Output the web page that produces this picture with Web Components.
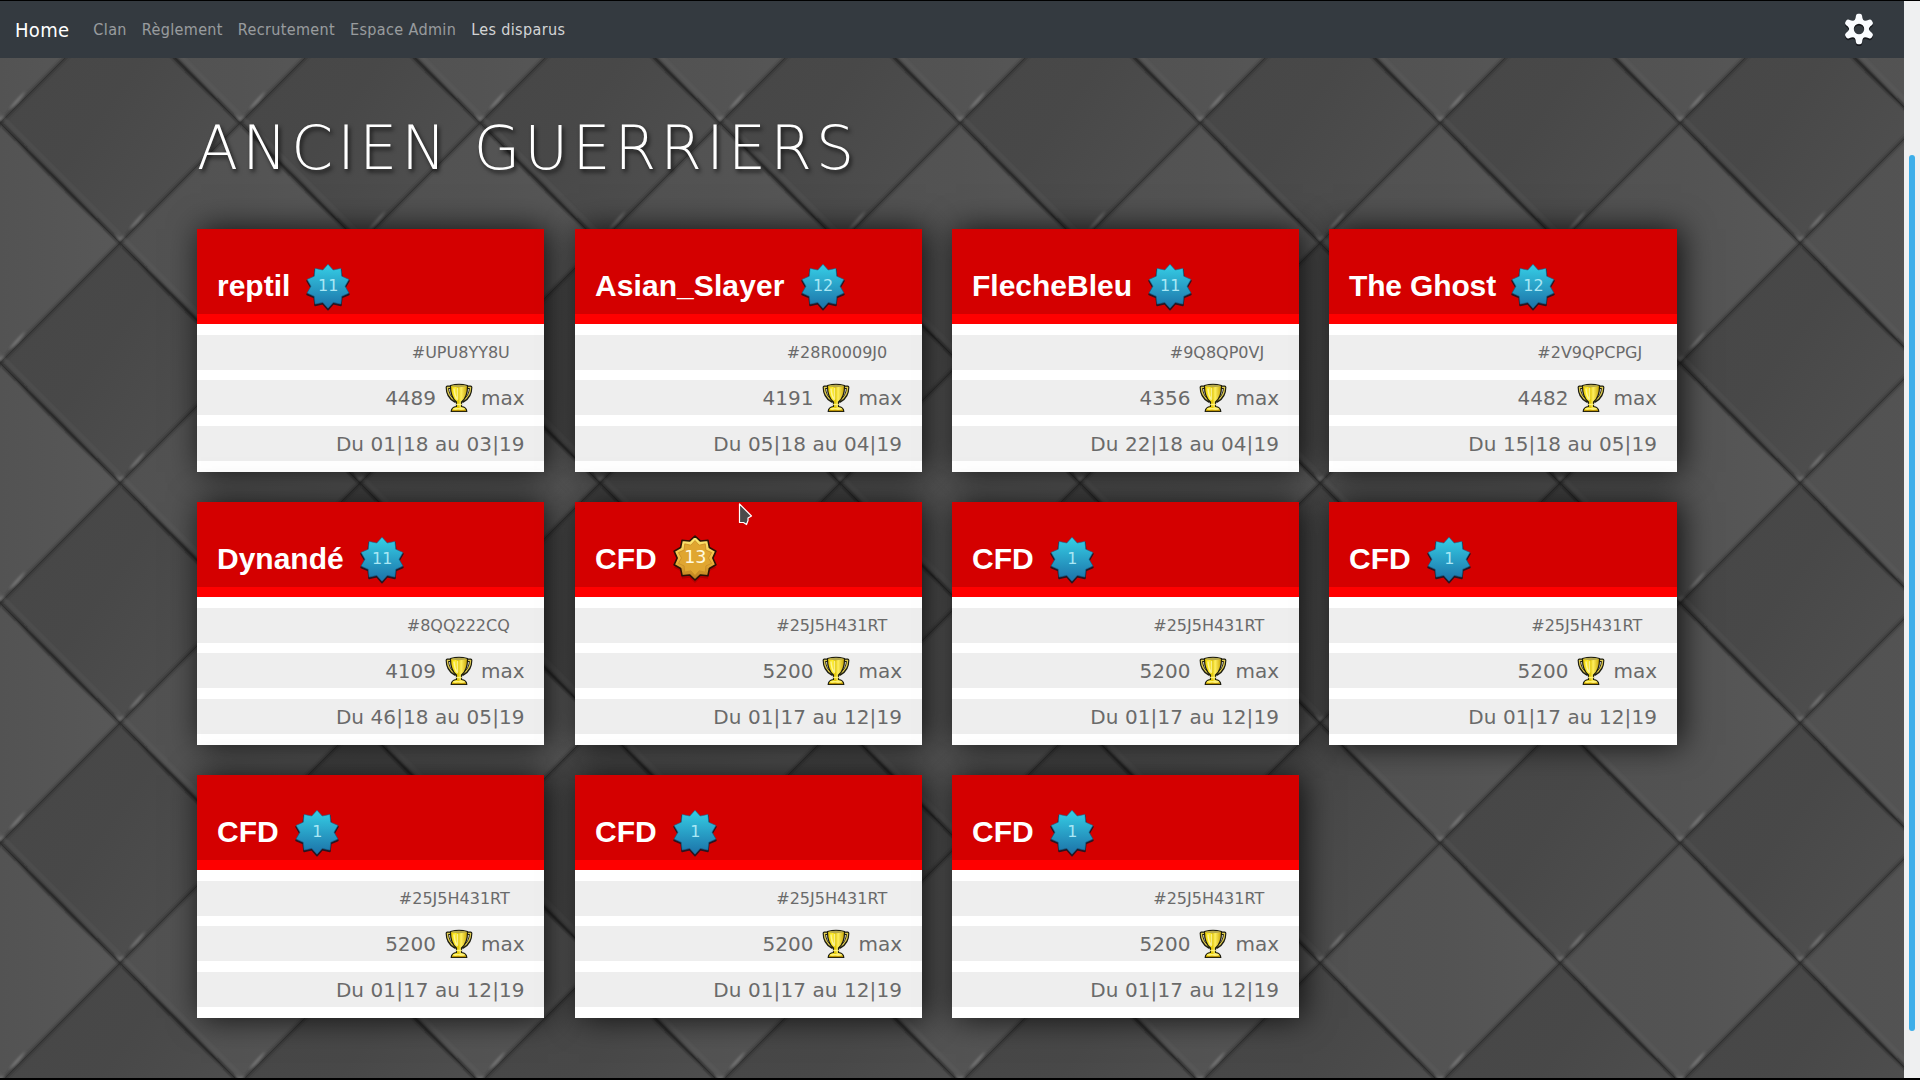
<!DOCTYPE html>
<html lang="fr">
<head>
<meta charset="utf-8">
<title>Les disparus</title>
<style>
html,body{margin:0;height:100%;overflow:hidden;background:#000}
body{font-family:"DejaVu Sans",sans-serif}
</style>
</head>
<body>
<clan-page></clan-page>
<script>
const define = (name, html) => {
  const t = document.createElement('template');
  t.innerHTML = html;
  customElements.define(name, class extends HTMLElement {
    constructor() {
      super();
      this.attachShadow({mode: 'open'}).appendChild(t.content.cloneNode(true));
    }
  });
};

// One seam running down-right from a node, thickest in its middle.
const downSeam = ([x, y]) => `
<path d="M${x+3} ${y-3}L${x+123} ${y+117}" transform="translate(1.800 -.8)" stroke="#6b6b6b" stroke-opacity=".4" stroke-width="1.600"/>
<path d="M${x} ${y}L${x+120} ${y+120}" stroke="#262626" stroke-opacity=".66" stroke-width="2.600"/>
<path d="M${x} ${y}Q${x+64} ${y+59} ${x+120} ${y+120}Q${x+55} ${y+62} ${x} ${y}Z" fill="#202020" fill-opacity=".6"/>`;
// One seam running up-right from a node.
const upSeam = ([x, y]) => `
<path d="M${x} ${y}L${x+120} ${y-120}" stroke="#2c2c2c" stroke-opacity=".62" stroke-width="2.400"/>
<path d="M${x} ${y}L${x+120} ${y-120}" stroke="#2c2c2c" stroke-opacity=".18" stroke-width="6"/>`;
const glint = ([x, y]) => `<path d="M${x+9} ${y-14}Q${x+14} ${y-22} ${x+25} ${y-32}Q${x+20} ${y-20} ${x+9} ${y-14}Z" fill="#a0a0a0" fill-opacity=".45"/>
<path d="M${x-4} ${y-9}L${x} ${y-2}L${x+4} ${y-8}L${x} ${y-5}Z" fill="#aaa" fill-opacity=".5"/>`;
const nodesDown = [[0,120],[120,0],[-120,0],[120,240],[0,-120],[240,120]];
const nodesUp = [[0,120],[120,240],[-120,240],[120,0],[0,360],[240,120]];
const nodesGlint = [[0,120],[240,120],[120,240],[120,0]];

define('leather-wall', `
<style>:host{display:block;width:100%;height:100%}svg{display:block;width:100%;height:100%}</style>
<svg aria-hidden="true">
<defs>
<linearGradient id="d" x1="0" y1="0" x2="1" y2=".7"><stop offset="0.2" stop-color="#474747"/><stop offset=".5" stop-color="#484848"/><stop offset="1" stop-color="#505050"/></linearGradient>
<linearGradient id="l" x1="0" y1="0" x2="1" y2="0"><stop offset="0" stop-color="#515151"/><stop offset=".5" stop-color="#535353"/><stop offset="1" stop-color="#585858"/></linearGradient>
<filter id="s" filterUnits="userSpaceOnUse" x="-20" y="-20" width="280" height="280"><feGaussianBlur stdDeviation="1"/></filter>
<pattern id="p" width="240" height="240" y="2" patternUnits="userSpaceOnUse">
<path d="M-120 0L0-120L120 0L0 120Z" fill="url(#l)"/><path d="M-120 240L0 120L120 240L0 360Z" fill="url(#l)"/><path d="M120 0L240-120L360 0L240 120Z" fill="url(#l)"/><path d="M120 240L240 120L360 240L240 360Z" fill="url(#l)"/>
<path d="M0 120L120 0L240 120L120 240Z" fill="url(#d)"/>
<g filter="url(#s)" fill="none">${nodesUp.map(upSeam).join('')}${nodesDown.map(downSeam).join('')}${nodesGlint.map(glint).join('')}</g>
</pattern>
</defs>
<rect width="100%" height="100%" fill="url(#p)"/>
</svg>`);

const gear = (() => {
  let d = '';
  for (let i = 0; i < 6; i++) {
    const a = i * 60 - 90;
    const p = (r, o) => { const t = (a + o) * Math.PI / 180; return (r * Math.cos(t)).toFixed(2) + ' ' + (r * Math.sin(t)).toFixed(2); };
    d += `${i ? 'L' : 'M'}${p(10, -25)}Q${p(11,-17)} ${p(13.6, -13)}Q${p(15.3, -10)} ${p(15.3, -4)}L${p(15.3, 4)}Q${p(15.3, 10)} ${p(13.6, 13)}Q${p(11,17)} ${p(10, 25)}`;
  }
  return d + 'ZM0-5.2A5.2 5.2 0 1 0 0 5.2A5.2 5.2 0 1 0 0-5.2Z';
})();

define('nav-bar', `
<style>
:host{display:flex;align-items:center;height:57px;background:#343a40;padding:0 29px 0 15px;box-sizing:border-box;color:rgba(255,255,255,.5);font:16px "DejaVu Sans Condensed","DejaVu Sans",sans-serif;font-stretch:condensed}
nav{display:flex;flex:1;align-items:center;gap:15px;letter-spacing:.36px}
.brand{font-size:20px;color:#fff;margin-right:9px;letter-spacing:.3px}
.on{color:rgba(255,255,255,.8)}
svg{display:block;width:32px;height:34px;margin-top:0}
</style>
<nav><span class="brand">Home</span><span>Clan</span><span>Règlement</span><span>Recrutement</span><span>Espace Admin</span><span class="on">Les disparus</span></nav>
<svg viewBox="-16 -16 32 34"><path d="${gear}" transform="translate(0 1.8)" fill="#15171c" fill-rule="evenodd"/><path d="${gear}" fill="#fafcff" fill-rule="evenodd"/></svg>`);

const star = (r1, r2, n = 10) => {
  let s = '';
  for (let i = 0; i < n * 2; i++) {
    const r = i % 2 ? r2 : r1, t = i * Math.PI / n - Math.PI / 2;
    s += `${(r * Math.cos(t)).toFixed(2)},${(r * Math.sin(t)).toFixed(2)} `;
  }
  return s;
};

define('level-badge', `
<style>
:host{display:grid;width:46px;height:46px;place-items:center;color:#a9e7f5;font-size:16px}
svg{grid-area:1/1;width:46px;height:46px;display:block;overflow:visible}
span{grid-area:1/1;line-height:20px;margin-top:-1px;padding-left:1px}
.gold{display:none}
:host([gold]) .gold{display:block;margin-top:-4px}
:host([gold]) .blue{display:none}
:host([gold]){color:#fffbe0;font-size:17.500px}
:host([gold]) span{margin-top:-6px}
</style>
<svg class="blue" viewBox="-23 -23 46 46">
<defs><linearGradient id="b" x1="0" y1="0" x2="0" y2="1"><stop offset="0" stop-color="#36cfe6"/><stop offset="1" stop-color="#1c72a8"/></linearGradient></defs>
<polygon points="${star(22,17)}" transform="translate(0 .6)" fill="#123657" stroke="#2a1420" stroke-width="1.600" stroke-linejoin="round"/>
<polygon points="${star(22,17)}" transform="translate(0 -.8)" fill="url(#b)" stroke="#1a6790" stroke-width=".6" stroke-linejoin="round"/>
</svg>
<svg class="gold" viewBox="-23 -23 46 46">
<defs><linearGradient id="g" x1="0" y1="0" x2="0" y2="1"><stop offset="0" stop-color="#fff07a"/><stop offset=".5" stop-color="#f0bc42"/><stop offset="1" stop-color="#b87a1a"/></linearGradient></defs>
<polygon points="${star(22,17.5)}" transform="translate(0 3)" fill="#900" fill-opacity=".6"/>
<polygon points="${star(22,17.800)}" fill="url(#g)" stroke="#2a1206" stroke-width="1.600" stroke-linejoin="round"/>
<polygon points="${star(17.5,13.5)}" fill="#e0a630" stroke="#c88c26" stroke-width=".8" stroke-linejoin="round"/>
</svg>
<span><slot></slot></span>`);

define('trophy-icon', `
<style>:host{display:block;width:28px;height:30px}svg{display:block}</style>
<svg width="28" height="30" viewBox="0 0 28 30">
<defs><linearGradient id="t"><stop offset="0" stop-color="#e8c800"/><stop offset=".3" stop-color="#ffee30"/><stop offset=".45" stop-color="#e0c400"/><stop offset=".62" stop-color="#fff060"/><stop offset="1" stop-color="#c8a400"/></linearGradient></defs>
<g stroke-linejoin="round" stroke-linecap="round">
<path d="M6 4.300H2.300Q2.300 14 10 18M22 4.300H25.700Q25.700 14 18 18" fill="none" stroke="#1d1d10" stroke-width="3.400"/>
<path d="M6 4.300H2.400Q2.600 13.500 10 17.400M22 4.300H25.600Q25.400 13.500 18 17.400" fill="none" stroke="#e0cc50" stroke-width="1.300"/>
<path d="M5.500 2.500Q14 .3 22.500 2.500Q22.800 14 16.500 19V23.500Q21.500 24 21.800 28.500H6.200Q6.500 24 11.500 23.500V19Q5.200 14 5.500 2.500Z" fill="url(#t)" stroke="#1d1d10" stroke-width="1.200"/>
<ellipse cx="14" cy="3" rx="7.600" ry="1.200" fill="#b7a94a"/>
<path d="M9 6Q9.500 13 12.300 16.500M12.500 5.500V16" fill="none" stroke="#fffbc0" stroke-width="1.500" stroke-opacity=".7"/>
<path d="M9 25.700H19M11.800 21.500H16.200" stroke="#fff27a" stroke-width="1.400"/>
<path d="M7.500 27.600H20.500" stroke="#b58d00" stroke-width="1"/>
</g></svg>`);

define('warrior-card', `
<style>
:host{display:flex;flex-direction:column;height:243px;box-sizing:border-box;background:#fff;box-shadow:4px 0 30px rgba(0,0,0,.8);color:#6a6a6a;padding-bottom:11px}
header{display:flex;align-items:flex-end;height:95px;box-sizing:border-box;border-bottom:10px solid #f00;background:#d40000;padding:0 20px 4px;margin-bottom:11px;color:#fff;font:bold 30px/35px "Liberation Sans",sans-serif}
h2{margin:0 0 7px;font:inherit;white-space:nowrap;width:var(--name-width)}
::slotted([slot=level]){font-family:"DejaVu Sans",sans-serif;font-weight:400}
.row{display:flex;align-items:center;justify-content:flex-end;height:35px;padding:0 var(--edge,20px);background:#eee;font-size:20px;margin-bottom:10.700px}
.row:last-child{margin:0;letter-spacing:.08px}
trophy-icon{margin:0 8px 0 9px}
.row.tag{font-size:16px;padding-right:calc(var(--edge,20px) + 14.800px)}
</style>
<header><h2><slot name="name"></slot></h2><slot name="level"></slot></header>
<div class="row tag"><slot name="tag"></slot></div>
<div class="row"><slot name="cups"></slot><trophy-icon></trophy-icon><span>max</span></div>
<div class="row"><slot name="dates"></slot></div>`);

define('mouse-pointer', `
<style>:host{display:block;position:absolute;left:738px;top:502px}svg{display:block}</style>
<svg width="16" height="24" viewBox="0 0 16 24"><path d="M1.500 2V20.500H5.500L8.500 22.500L10 18.500V16L13.500 14Z" fill="#4a4a4a" stroke="#fff" stroke-width="1.200" stroke-linejoin="round"/></svg>`);

define('scroll-track', `
<style>:host{display:block;box-sizing:border-box;width:16px;background:#eff0f1;padding:154px 5px 47px}i{display:block;height:100%;border-radius:3px;background:#3daee9}</style><i></i>`);

const people = [
 ['reptil',11,'#UPU8YY8U',4489,'Du 01|18 au 03|19',87.7],
 ['Asian_Slayer',12,'#28R0009J0',4191,'Du 05|18 au 04|19',204.6,.08],
 ['FlecheBleu',11,'#9Q8QP0VJ',4356,'Du 22|18 au 04|19',174.8],
 ['The Ghost',12,'#2V9QPCPGJ',4482,'Du 15|18 au 05|19',161,-.15],
 ['Dynandé',11,'#8QQ222CQ',4109,'Du 46|18 au 05|19',141.8],
 ['CFD',13,'#25J5H431RT',5200,'Du 01|17 au 12|19',76.8],
 ...Array.from({length: 5}, () => ['CFD',1,'#25J5H431RT',5200,'Du 01|17 au 12|19',76.8])
];

define('clan-page', `
<style>
:host{display:flex;height:1080px;width:1920px;box-sizing:border-box;padding:1px 0 2px;background:#000;position:relative}
.view{display:grid;flex:1;min-width:0;grid-template-rows:57px 1fr;overflow:hidden}
leather-wall{grid-area:1/1/3/2}
nav-bar{grid-area:1/1}
main{grid-area:2/1;padding:0 167px 0 197px;min-height:0}
h1{margin:0;padding-top:51px;height:171px;box-sizing:border-box;font:200 60px/78px "DejaVu Sans Light","DejaVu Sans",sans-serif;letter-spacing:4.180px;color:#fff;text-shadow:2px 3px 4px rgba(0,0,0,.7);white-space:nowrap}
section{display:grid;grid-template-columns:378px 377px 377px 378px;row-gap:30px}
warrior-card{margin-right:30px}
warrior-card:nth-child(4n+1){margin-right:31px;--edge:19.400px}
</style>
<div class="view"><leather-wall></leather-wall><nav-bar></nav-bar>
<main><h1>ANCIEN GUERRIERS</h1><section>
${people.map(([n,l,t,c,d,w,s = 0]) => `<warrior-card style="--name-width:${w}px"><span slot="name" style="letter-spacing:${s}px">${n}</span><level-badge slot="level"${l === 13 ? ' gold' : ''}>${l}</level-badge><span slot="tag">${t}</span><span slot="cups">${c}</span><span slot="dates">${d}</span></warrior-card>`).join('')}
</section></main></div>
<scroll-track></scroll-track>
<mouse-pointer></mouse-pointer>`);
</script>
</body>
</html>
